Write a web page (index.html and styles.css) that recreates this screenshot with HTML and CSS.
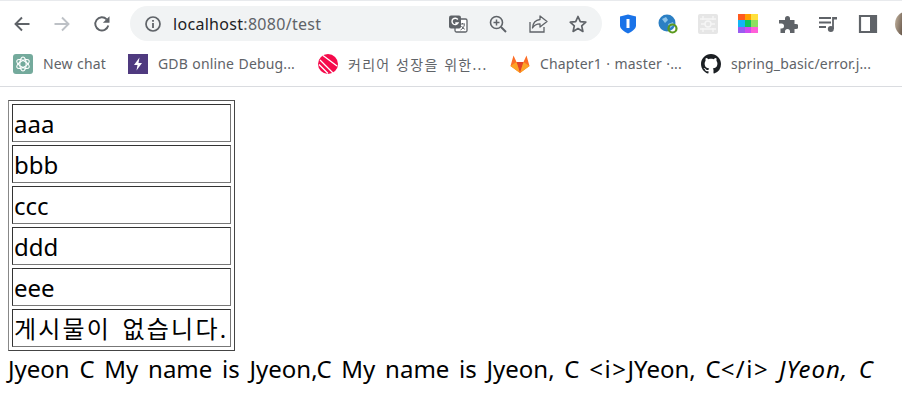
FILE: index.html
```html
<!DOCTYPE html>
<html lang="ko">
<head>
    <meta charset="UTF-8">
    <meta name="viewport" content="width=device-width, initial-scale=1.0">
    <title>test</title>
    <link rel="stylesheet" href="styles.css">
</head>
<body>
    <header class="chrome">
        <div class="toolbar">
            <div class="nav">
                <svg class="icon" viewBox="0 0 20 20"><path d="M17.500 10H3.500M10 3.500L3.500 10l6.500 6.500" fill="none" stroke="#5f6368" stroke-width="1.900"/></svg>
                <svg class="icon" viewBox="0 0 20 20"><path d="M2.500 10h14M10 3.500l6.500 6.500-6.500 6.500" fill="none" stroke="#bdc1c6" stroke-width="1.900"/></svg>
                <svg class="icon" viewBox="0 0 20 20"><path d="M16.300 11.500a6.600 6.600 0 1 1-1.600-6.200" fill="none" stroke="#5f6368" stroke-width="1.900"/><path d="M17.500 2.200v6.600h-6.600z" fill="#5f6368"/></svg>
            </div>
            <div class="address">
                <svg class="info" viewBox="0 0 18 18"><circle cx="9" cy="9" r="7" fill="none" stroke="#5f6368" stroke-width="1.700"/><path d="M8.100 8h1.800v5H8.100zM8.100 5h1.800v1.800H8.100z" fill="#5f6368"/></svg>
                <span class="url"><b>localhost</b>:8080/test</span>
                <div class="address-icons">
                    <svg class="icon" viewBox="0 0 20 20"><rect x="7" y="5" width="12" height="13" rx="1.500" fill="#fff" stroke="#5f6368" stroke-width="1.300"/><path d="M12 10h5M14.500 9v1M12.500 16c2-1 3.500-3 4-5.500M13.500 12c.8 1.500 1.800 2.600 3.300 3.300" fill="none" stroke="#5f6368"/><rect x="1" y="1.500" width="12" height="13" rx="2" fill="#5f6368"/><path d="M9.800 5.500A3.200 3.200 0 1 0 10 9H7.300" fill="none" stroke="#fff" stroke-width="1.400"/></svg>
                    <svg class="icon" viewBox="0 0 20 20"><circle cx="8.500" cy="8.500" r="6" fill="none" stroke="#5f6368" stroke-width="1.600"/><path d="M13 13l5 5" stroke="#5f6368" stroke-width="2"/><path d="M5.500 8.500h6M8.500 5.500v6" stroke="#5f6368" stroke-width="1.500"/></svg>
                    <svg class="icon" viewBox="0 0 20 20"><path d="M2 8v10h14v-5" fill="none" stroke="#5f6368" stroke-width="1.300"/><path d="M12 2l7 5.500-7 5.500V9.800C8.500 9.800 6 11 4.500 14c.3-4.500 3-8 7.500-8.500z" fill="none" stroke="#5f6368" stroke-width="1.300" stroke-linejoin="round"/></svg>
                    <svg class="icon" viewBox="0 0 20 20"><path d="M10 2.500l2.300 5.100 5.500.6-4.100 3.700 1.200 5.500L10 14.600l-4.900 2.800 1.200-5.500-4.100-3.700 5.500-.6z" fill="none" stroke="#5f6368" stroke-width="1.700" stroke-linejoin="round"/></svg>
                </div>
            </div>
            <div class="extensions">
                <svg class="icon" viewBox="0 0 20 20"><path d="M2 2.500L10 .5l8 2v9c0 3.500-4 6-8 8-4-2-8-4.500-8-8z" fill="#1a73e8"/><path d="M8.500 5h3v9h-3z" fill="#fff"/></svg>
                <svg class="icon" viewBox="0 0 20 20"><circle cx="9" cy="9" r="8.500" fill="#2b7fc4"/><path d="M4 5l4-2 2 3-3 3zM10 10l5-2 1 3-4 3z" fill="#8cc3ea"/><circle cx="14.500" cy="14.500" r="4" fill="none" stroke="#5c9a1e" stroke-width="2.200"/></svg>
                <svg class="icon" viewBox="0 0 20 20"><rect width="20" height="20" rx="2" fill="#e6e6e6"/><path d="M2 5h16M2 15h16M5 2v4M15 2v4M5 14v4M15 14v4M3 10h4M13 10h4" stroke="#f6f6f6" stroke-width="1.400"/><circle cx="10" cy="10" r="3" fill="none" stroke="#f6f6f6" stroke-width="1.400"/></svg>
                <div class="palette">
                    <i class="c1"></i><i class="c2"></i><i class="c3"></i>
                    <i class="c4"></i><i class="c5"></i><i class="c6"></i>
                    <i class="c7"></i><i class="c8"></i><i class="c9"></i>
                </div>
                <svg class="icon" viewBox="0 0 20 20"><path d="M7 4.500a2.500 2.500 0 0 1 5 0V6h4.500v4H18a2.500 2.500 0 0 1 0 5h-1.500v4H12v-1.500a2.500 2.500 0 0 0-5 0V19H2.500v-4.500H3.500a2.500 2.500 0 0 0 0-5H1V6h6z" fill="#5f6368"/></svg>
                <svg class="icon" viewBox="0 0 20 20"><path d="M1 4h12M1 8.500h12M1 13h7" stroke="#5f6368" stroke-width="1.800"/><path d="M15 3v12" stroke="#5f6368" stroke-width="1.800"/><path d="M15 3h4v2.500h-4z" fill="#5f6368"/><circle cx="12.800" cy="15" r="3" fill="#5f6368"/></svg>
                <svg class="icon" viewBox="0 0 20 20"><path d="M2 2h16v16H2z" fill="none" stroke="#5f6368" stroke-width="2.200"/><path d="M12 2h6v16h-6z" fill="#5f6368"/></svg>
                <div class="avatar"></div>
            </div>
        </div>
        <nav class="bookmarks">
            <a class="bookmark">
                <svg class="favicon" viewBox="0 0 20 20"><rect width="20" height="20" rx="3" fill="#74aa9c"/><g fill="none" stroke="#fff" stroke-width="1.100"><ellipse cx="10" cy="10" rx="3.200" ry="7"/><ellipse cx="10" cy="10" rx="3.200" ry="7" transform="rotate(60 10 10)"/><ellipse cx="10" cy="10" rx="3.200" ry="7" transform="rotate(120 10 10)"/></g></svg>
                New chat
            </a>
            <a class="bookmark">
                <svg class="favicon" viewBox="0 0 20 20"><rect width="20" height="20" fill="#4f3a7f"/><path d="M11.500 3.500L6 11h3.500l-1 5.500L14 9h-3.500z" fill="#fff"/></svg>
                GDB online Debug...
            </a>
            <a class="bookmark">
                <svg class="favicon" viewBox="0 0 20 20"><circle cx="10" cy="10" r="10" fill="#f50a4b"/><path d="M5 1.500L19 12M2 6l13 13M1 10.500l9 9" stroke="#fff" stroke-width="1.300"/></svg>
                <span class="bookmark-ko">커리어 성장을 위한...</span>
            </a>
            <a class="bookmark">
                <svg class="favicon" viewBox="0 0 20 20"><path d="M10 19L.5 12 3.500 1.500 6.500 8h7l3-6.500L19.500 12z" fill="#fc6d26"/><path d="M10 19L6.500 8h7z" fill="#e24329"/><path d="M10 19L.5 12l6-4zM10 19l9.500-7-6-4z" fill="#fca326"/></svg>
                Chapter1 · master ·...
            </a>
            <a class="bookmark">
                <svg class="favicon" viewBox="0 0 16 16"><path fill="#1b1f23" d="M8 0C3.580 0 0 3.580 0 8c0 3.540 2.290 6.530 5.470 7.590.4.070.55-.17.55-.38 0-.19-.01-.82-.01-1.490-2.010.37-2.530-.49-2.690-.94-.09-.23-.48-.94-.82-1.130-.28-.15-.68-.52-.01-.53.630-.01 1.080.58 1.230.82.720 1.210 1.870.87 2.330.66.070-.52.280-.87.510-1.070-1.780-.2-3.640-.89-3.640-3.950 0-.87.310-1.590.820-2.150-.08-.2-.36-1.020.08-2.120 0 0 .67-.21 2.200.82.640-.18 1.320-.27 2-.27s1.360.09 2 .27c1.530-1.040 2.200-.82 2.200-.82.440 1.100.160 1.920.08 2.120.510.560.820 1.270.820 2.150 0 3.070-1.870 3.750-3.650 3.950.290.250.540.730.540 1.480 0 1.070-.01 1.930-.01 2.200 0 .210.150.460.550.380A8.010 8.010 0 0 0 16 8c0-4.420-3.580-8-8-8z"/></svg>
                spring_basic/error.j...
            </a>
        </nav>
    </header>
    <main class="page">
        <table class="board">
            <tr><td>aaa</td></tr>
            <tr><td>bbb</td></tr>
            <tr><td>ccc</td></tr>
            <tr><td>ddd</td></tr>
            <tr><td>eee</td></tr>
            <tr><td class="notice">게시물이 없습니다.</td></tr>
        </table>
        <p class="line">Jyeon C My name is Jyeon,C My name is Jyeon, C <span class="tag">&lt;i&gt;</span>JYeon, C<span class="tag">&lt;/i&gt;</span> <i>JYeon, C</i></p>
    </main>
</body>
</html>
```

FILE: styles.css
```css
* {
    box-sizing: border-box;
}
body {
    margin: 0;
    background-color: #fff;
    font-family: "Noto Sans", "Noto Sans CJK KR", sans-serif;
    color: #000;
    overflow: hidden;
}
.chrome {
    height: 87px;
    border-top: 1px solid #e8eaed;
    border-bottom: 1px solid #dadce0;
}
.toolbar {
    height: 40px;
    padding: 5px 0 0 12px;
    display: flex;
    align-items: flex-start;
}
.icon {
    width: 20px;
    height: 20px;
    flex: none;
}
.nav {
    height: 35px;
    width: 118px;
    display: flex;
    align-items: center;
    gap: 20px;
}
.address {
    width: 472px;
    height: 35px;
    background-color: #f1f3f4;
    border-radius: 18px;
    padding: 0 14px;
    display: flex;
    align-items: center;
}
.info {
    width: 18px;
    height: 18px;
    flex: none;
}
.url {
    margin-left: 11px;
    font-size: 16px;
    letter-spacing: 0.3px;
    color: #5f6368;
}
.url b {
    font-weight: 400;
    color: #202124;
}
.address-icons {
    margin-left: auto;
    display: flex;
    gap: 20px;
}
.extensions {
    margin-left: 16px;
    height: 35px;
    display: flex;
    align-items: center;
    gap: 20px;
}
.palette {
    width: 20px;
    height: 20px;
    flex: none;
    display: grid;
    grid-template-columns: repeat(3, 1fr);
    grid-template-rows: repeat(3, 1fr);
}
.c1 { background-color: #ff5a1f; }
.c2 { background-color: #ffa000; }
.c3 { background-color: #ffe03c; }
.c4 { background-color: #12b5f5; }
.c5 { background-color: #0fc35a; }
.c6 { background-color: #8ee060; }
.c7 { background-color: #9a5cf0; }
.c8 { background-color: #d04cf0; }
.c9 { background-color: #ff60d8; }
.avatar {
    width: 20px;
    height: 26px;
    flex: none;
    border-radius: 13px 0 0 13px;
    background: linear-gradient(100deg, #c9b9a4 0%, #4a3a30 60%, #221a16 100%);
    margin-left: -3px;
    margin-right: -20px;
}
.bookmarks {
    height: 45px;
    padding-left: 13px;
    display: grid;
    grid-template-columns: 115px 190px 192px 191px auto;
    align-items: center;
    font-size: 14px;
    letter-spacing: 0.15px;
    word-spacing: 0.6px;
    color: #5f6368;
}
.bookmark {
    display: flex;
    align-items: center;
    gap: 10px;
    white-space: nowrap;
}
.bookmark-ko {
    letter-spacing: 1.3px;
}
.favicon {
    width: 20px;
    height: 20px;
    flex: none;
}
.page {
    padding: 13px 8px 0;
}
.board {
    width: 227px;
    border-collapse: separate;
    border-spacing: 3px;
    border: 1px solid;
    border-color: #555 #444 #444 #888;
    font-size: 24px;
    line-height: 34px;
}
.board td {
    height: 38px;
    padding: 2px 1px 0;
    border: 1px solid;
    border-color: #333 #777 #777 #333;
    white-space: nowrap;
}
.board .notice {
    letter-spacing: 2.2px;
    word-spacing: 3px;
}
.line {
    margin: 0;
    font-size: 24px;
    line-height: 36px;
    white-space: nowrap;
    word-spacing: 3.5px;
}
.tag {
    letter-spacing: 1.5px;
}
.line i {
    letter-spacing: 1px;
}
```
